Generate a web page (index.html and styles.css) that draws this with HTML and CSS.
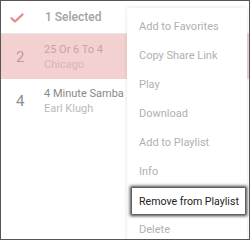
FILE: index.html
```html
<!DOCTYPE html>
<html>
<head>
<meta charset="utf-8">
<link rel="stylesheet" href="styles.css">
</head>
<body>
<div class="frame">
  <div class="header">
    <svg class="check" width="14" height="10" viewBox="0 0 14 10"><path d="M1.5 5.2 L5 8.5 L12.5 1.5" fill="none" stroke="#e8848d" stroke-width="2.2" stroke-linecap="round" stroke-linejoin="round"/></svg>
    <span class="title">1 Selected</span>
  </div>
  <div class="row selected">
    <span class="num">2</span>
    <div class="info">
      <div class="song">25 Or 6 To 4</div>
      <div class="artist">Chicago</div>
    </div>
  </div>
  <div class="row">
    <span class="num">4</span>
    <div class="info">
      <div class="song">4 Minute Samba</div>
      <div class="artist">Earl Klugh</div>
    </div>
  </div>
  <div class="menu">
    <div class="item">Add to Favorites</div>
    <div class="item">Copy Share Link</div>
    <div class="item">Play</div>
    <div class="item">Download</div>
    <div class="item">Add to Playlist</div>
    <div class="item">Info</div>
    <div class="item active">Remove from Playlist</div>
    <div class="item">Delete</div>
  </div>
</div>
</body>
</html>
```
FILE: styles.css
```css
html, body { margin: 0; padding: 0; background: #fff; }
body { font-family: Roboto, "Noto Sans", sans-serif; }
.frame {
  position: relative;
  width: 250px;
  height: 240px;
  box-sizing: border-box;
  border: 1px solid #555;
  overflow: hidden;
  background: #fff;
}
.header {
  height: 33px;
  display: flex;
  align-items: center;
  border-bottom: 1px solid #e6e6e6;
  box-sizing: border-box;
}
.check { margin-left: 9px; margin-top: 1px; }
.title {
  margin-left: 21px;
  font-size: 12px;
  font-weight: 500;
  color: #a3a3a3;
}
.row {
  height: 44px;
  display: flex;
  align-items: center;
}
.row.selected { background: #f3d1d1; height: 45px; }
.num {
  width: 43px;
  padding-left: 15px;
  box-sizing: border-box;
  font-size: 15px;
  color: #8f8f8f;
}
.selected .num { color: #c29a9a; }
.info { display: flex; flex-direction: column; gap: 2px; }
.song { font-size: 11px; color: #888; }
.artist { font-size: 11px; color: #b9b9b9; }
.selected .song { color: #c8a2a2; }
.selected .artist { color: #dcb3b3; }
.menu {
  position: absolute;
  left: 126px;
  top: 7px;
  width: 120px;
  bottom: -10px;
  background: #fff;
  box-shadow: 0 0 4px rgba(0,0,0,0.12);
  padding-top: 4px;
}
.item {
  height: 29px;
  display: flex;
  align-items: center;
  padding-left: 12px;
  font-size: 11px;
  color: #b0b0b0;
}
.item.active {
  position: relative;
  margin: 2px 2px 1px 5px;
  padding-left: 7px;
  height: 26px;
  background: #fff;
  color: #222;
  font-size: 10.6px;
  box-shadow: 0 0 3px 2px rgba(0,0,0,0.75);
}
```
